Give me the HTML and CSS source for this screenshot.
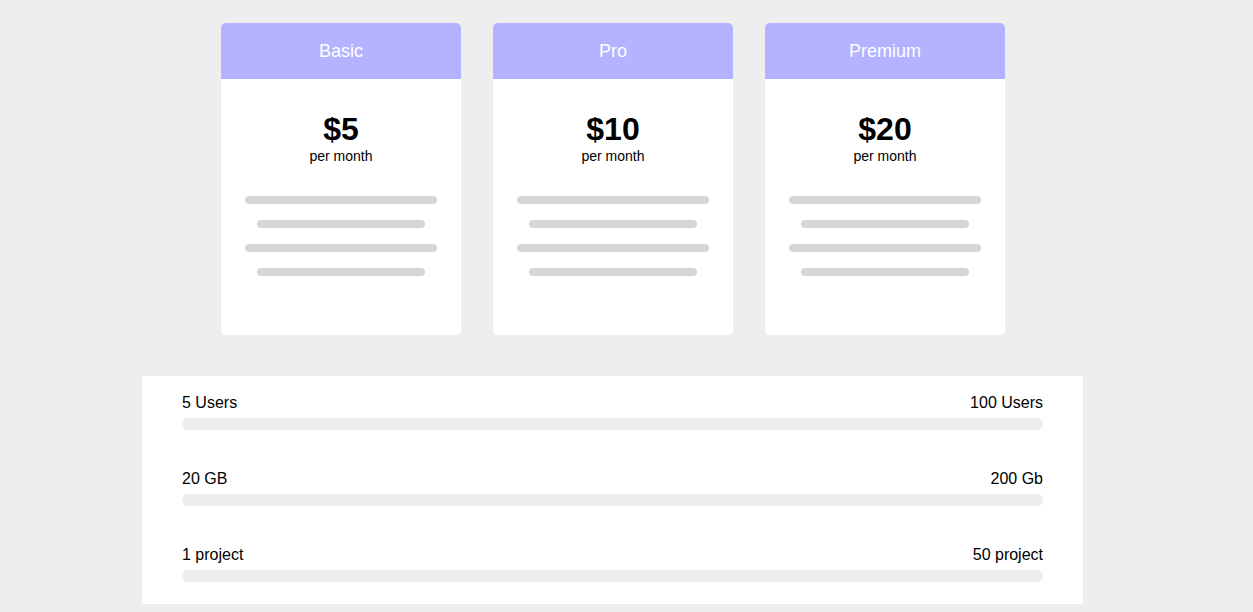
FILE: index.html
```html
<!DOCTYPE html>
<html>
<head>
<meta charset="utf-8">
<link rel="stylesheet" href="styles.css">
</head>
<body>
<div class="page">
  <div class="cards">
    <div class="card">
      <div class="card-head">Basic</div>
      <div class="card-body">
        <div class="price">$5</div>
        <div class="period">per month</div>
        <div class="lines">
          <div class="line long"></div>
          <div class="line short"></div>
          <div class="line long"></div>
          <div class="line short"></div>
        </div>
      </div>
    </div>
    <div class="card">
      <div class="card-head">Pro</div>
      <div class="card-body">
        <div class="price">$10</div>
        <div class="period">per month</div>
        <div class="lines">
          <div class="line long"></div>
          <div class="line short"></div>
          <div class="line long"></div>
          <div class="line short"></div>
        </div>
      </div>
    </div>
    <div class="card">
      <div class="card-head">Premium</div>
      <div class="card-body">
        <div class="price">$20</div>
        <div class="period">per month</div>
        <div class="lines">
          <div class="line long"></div>
          <div class="line short"></div>
          <div class="line long"></div>
          <div class="line short"></div>
        </div>
      </div>
    </div>
  </div>
  <div class="panel">
    <div class="range">
      <div class="labels"><span>5 Users</span><span>100 Users</span></div>
      <div class="track"></div>
    </div>
    <div class="range">
      <div class="labels"><span>20 GB</span><span>200 Gb</span></div>
      <div class="track"></div>
    </div>
    <div class="range">
      <div class="labels"><span>1 project</span><span>50 project</span></div>
      <div class="track"></div>
    </div>
  </div>
</div>
</body>
</html>
```
FILE: styles.css
```css
html, body {
  margin: 0;
  padding: 0;
  background: #eeeeee;
  font-family: "Liberation Sans", Arial, sans-serif;
  color: #000;
}
.page {
  padding-top: 23px;
  padding-bottom: 8px;
}
.cards {
  display: flex;
  gap: 32px;
  margin-left: 221px;
}
.card {
  width: 240px;
  height: 312px;
  background: #fff;
  border-radius: 5px;
  overflow: hidden;
  display: flex;
  flex-direction: column;
}
.card-head {
  height: 56px;
  background: #b3b3ff;
  color: #fff;
  font-size: 18px;
  display: flex;
  align-items: center;
  justify-content: center;
}
.card-body {
  display: flex;
  flex-direction: column;
  align-items: center;
  padding-top: 32px;
}
.price {
  font-size: 32px;
  font-weight: bold;
  line-height: 36px;
}
.period {
  font-size: 14px;
  line-height: 16px;
  margin-top: 1px;
}
.lines {
  display: flex;
  flex-direction: column;
  align-items: center;
  gap: 16px;
  margin-top: 32px;
}
.line {
  height: 8px;
  border-radius: 4px;
  background: #d6d6d6;
}
.line.long { width: 192px; }
.line.short { width: 168px; }
.panel {
  margin-top: 41px;
  margin-left: 142px;
  width: 861px;
  background: #fff;
  padding: 18px 40px 22px;
  display: flex;
  flex-direction: column;
  gap: 40px;
}
.range {
  display: flex;
  flex-direction: column;
  gap: 6px;
}
.labels {
  display: flex;
  justify-content: space-between;
  font-size: 16px;
  line-height: 18px;
}
.track {
  height: 12px;
  border-radius: 6px;
  background: #eeeeee;
}
```
